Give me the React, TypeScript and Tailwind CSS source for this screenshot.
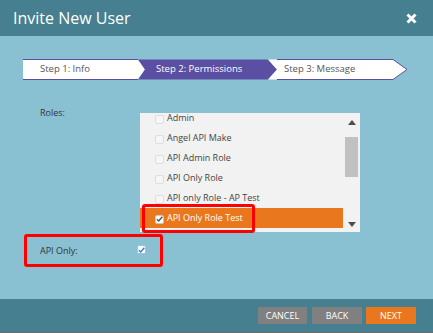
import { ReactNode } from "react"

const roles = [
  "Admin",
  "Angel API Make",
  "API Admin Role",
  "API Only Role",
  "API only Role - AP Test",
  "API Only Role Test",
]

function Box({ checked, tone = "grey" }: { checked?: boolean; tone?: "grey" | "blue" }) {
  const border = tone === "blue" ? "border-[#9cc3e6]" : checked ? "border-[#c9c9c9]" : "border-[#dedede]"
  return (
    <span
      className={
        "inline-flex items-center justify-center w-[9px] h-[9px] rounded-[2px] border shrink-0 " +
        border +
        (checked ? " bg-white" : " bg-[#f6f6f6]")
      }
    >
      {checked && (
        <svg width="8" height="8" viewBox="0 0 8 8">
          <path
            d="M1 4.2 L3.1 6.3 L7.2 1.4"
            fill="none"
            stroke={tone === "blue" ? "#2f7fd0" : "#555"}
            strokeWidth="1.6"
          />
        </svg>
      )}
    </span>
  )
}

function Steps() {
  return (
    <div className="relative w-[385px] h-[21px] ml-[23px]">
      <svg className="absolute inset-0" width="385" height="21" viewBox="0 0 385 21">
        <polygon points="0,0.5 115,0.5 122,10.5 115,20.5 0,20.5" fill="#fff" />
        <polygon points="115,0.5 245,0.5 254,10.5 245,20.5 115,20.5 122,10.5" fill="#5a4fa2" />
        <polygon points="245,0.5 370,0.5 384,10.5 370,20.5 245,20.5 254,10.5" fill="#fff" />
        <polyline points="0,0.5 115,0.5" stroke="#5a4fa2" fill="none" />
        <polyline points="0,20.5 115,20.5" stroke="#5a4fa2" fill="none" />
        <polyline points="254,0.5 370,0.5 384,10.5 370,20.5 254,20.5" stroke="#5a4fa2" fill="none" />
      </svg>
      <div className="relative flex h-full items-center text-[9.5px] text-[#555]">
        <span className="w-[133px] pl-[17px]">Step 1: Info</span>
        <span className="w-[128px] text-white">Step 2: Permissions</span>
        <span>Step 3: Message</span>
      </div>
    </div>
  )
}

function Frame({ children, className }: { children?: ReactNode; className: string }) {
  return <div className={"border-[3px] border-[#ff0000] rounded-[3px] " + className}>{children}</div>
}

export default function App() {
  return (
    <div className="w-[433px] h-[333px] flex flex-col font-['Open_Sans',sans-serif] overflow-hidden">
      {/* Header */}
      <div className="h-[36px] bg-[#467f8f] flex items-center justify-between pl-[13px] pr-[16px] shrink-0">
        <h1 className="text-[16px] text-white leading-none">Invite New User</h1>
        <svg width="11" height="11" viewBox="0 0 11 11">
          <path d="M1.5 1.5 L9.5 9.5 M9.5 1.5 L1.5 9.5" stroke="#fff" strokeWidth="3" />
        </svg>
      </div>

      {/* Body */}
      <div className="flex-1 bg-[#89c1d2] pt-[23px]">
        <Steps />

        <div className="flex mt-[27px]">
          <div className="w-[140px] pl-[40px] text-[9px] leading-[12px] text-[#333]">Roles:</div>
          <div className="relative mt-[6px] w-[220px] h-[119px] bg-[#f2f2f2] flex">
            <div className="flex-1 overflow-hidden">
              <ul className="-mt-[5px]">
                {roles.map((r) => {
                  const sel = r === "API Only Role Test"
                  return (
                    <li
                      key={r}
                      className={
                        "h-[20px] flex items-center gap-[3px] pl-[15px] text-[9px] " +
                        (sel ? "bg-[#e9771d] text-white" : "text-[#444]")
                      }
                    >
                      <span className="mt-[2px] flex">
                        <Box checked={sel} />
                      </span>
                      {r}
                    </li>
                  )
                })}
              </ul>
            </div>
            {/* scrollbar */}
            <div className="w-[17px] flex flex-col items-center pt-[7px]">
              <svg width="8" height="5" viewBox="0 0 8 5">
                <polygon points="4,0 8,5 0,5" fill="#4d4d4d" />
              </svg>
              <div className="mt-[12px] w-[13px] h-[40px] bg-[#c1c1c1]" />
              <svg className="mt-[45px]" width="8" height="5" viewBox="0 0 8 5">
                <polygon points="0,0 8,0 4,5" fill="#4d4d4d" />
              </svg>
            </div>
            <Frame className="absolute left-[2px] top-[91px] w-[113px] h-[29px]" />
          </div>
        </div>

        <Frame className="ml-[24px] mt-[2px] w-[139px] h-[33px] flex items-center pl-[13px]">
          <span className="w-[97px] text-[9px] text-[#333]">API Only:</span>
          <span className="-mt-[2px] flex">
            <Box checked tone="blue" />
          </span>
        </Frame>
      </div>

      {/* Footer */}
      <div className="h-[34px] bg-[#467f8f] border-b border-[#6b6b6b] flex items-center justify-end pr-[17px] gap-[4px] shrink-0">
        <button className="w-[49px] h-[17px] bg-[#808080] text-white text-[9px] mr-[1px]">CANCEL</button>
        <button className="w-[50px] h-[17px] bg-[#808080] text-white text-[9px]">BACK</button>
        <button className="w-[50px] h-[17px] bg-[#e9771d] text-white text-[9px]">NEXT</button>
      </div>
    </div>
  )
}
